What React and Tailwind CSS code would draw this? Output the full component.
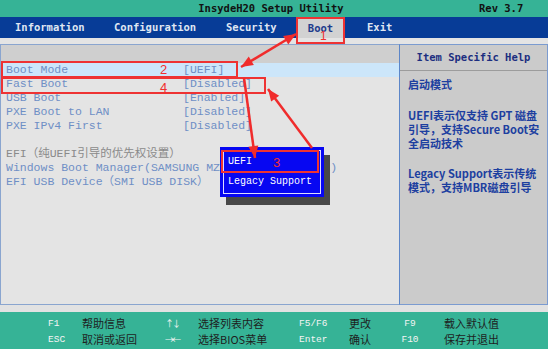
import React from 'react';

const bootRows = [
  { label: 'Boot Mode', value: '[UEFI]', active: true },
  { label: 'Fast Boot', value: '[Disabled]' },
  { label: 'USB Boot', value: '[Enabled]' },
  { label: 'PXE Boot to LAN', value: '[Disabled]' },
  { label: 'PXE IPv4 First', value: '[Disabled]' },
];

const footerRows = [
  ['F1', '帮助信息', '↑↓', '选择列表内容', 'F5/F6', '更改', 'F9', '载入默认值'],
  ['ESC', '取消或返回', '→←', '选择BIOS菜单', 'Enter', '确认', 'F10', '保存并退出'],
];

// red annotation arrow, optional head on either end
const Arrow = ({ x1, y1, x2, y2, startHead = false }) => {
  const head = (tx, ty, fx, fy) => {
    const dx = tx - fx;
    const dy = ty - fy;
    const len = Math.hypot(dx, dy);
    const ux = dx / len;
    const uy = dy / len;
    const bx = tx - ux * 12;
    const by = ty - uy * 12;
    return `${tx},${ty} ${bx - uy * 5},${by + ux * 5} ${bx + uy * 5},${by - ux * 5}`;
  };
  return (
    <g fill="#f02c2c" stroke="#f02c2c">
      <line x1={x1} y1={y1} x2={x2} y2={y2} strokeWidth="2.5" />
      <polygon points={head(x2, y2, x1, y1)} stroke="none" />
      {startHead && <polygon points={head(x1, y1, x2, y2)} stroke="none" />}
    </g>
  );
};

const App = () => {
  return (
    <div className="relative w-[548px] h-[349px] overflow-hidden flex flex-col bg-[#e4e4e4] font-['DejaVu_Sans_Mono',monospace]">
      {/* Title bar */}
      <div className="relative h-[17px] bg-[#36b396] text-[10.5px] font-bold text-[#111] leading-[17px]">
        <div className="text-center">
          <span className="ml-[-6px]">InsydeH20 Setup Utility</span>
        </div>
        <span className="absolute left-[479px] top-0">Rev 3.7</span>
      </div>

      {/* Menu bar */}
      <div className="h-[21px] bg-[#073c97] flex items-stretch pl-[15px] text-[10.5px] font-bold text-[#dfe6f2]">
        <span className="w-[99px] leading-[20px]">Information</span>
        <span className="w-[112px] leading-[20px]">Configuration</span>
        <span className="w-[72px] leading-[20px]">Security</span>
        <span className="w-[45px] mt-[2px] bg-[#d2d2d2] text-[#1e3c8c] text-center leading-[18px]">Boot</span>
        <span className="ml-[24px] leading-[20px]">Exit</span>
      </div>

      <div className="h-[6px] bg-[#e4e4e4]" />

      {/* Main area */}
      <div className="h-[261px] flex">
        <div className="w-[399px] border border-r-0 border-[#8aa5cf] bg-[#e4e4e4] flex flex-col font-['Liberation_Mono','Noto_Sans_CJK_SC',monospace] text-[11.5px] text-[#6f8fc6]">
          <div className="h-[18px] bg-[#cfcfcf]" />
          {bootRows.map((row) => (
            <div
              key={row.label}
              className={`h-[14px] leading-[14px] flex pl-[5px] ${row.active ? 'bg-[#cce6fa]' : ''}`}
            >
              <span className="w-[177px] whitespace-nowrap">{row.label}</span>
              <span className="whitespace-nowrap">{row.value}</span>
            </div>
          ))}
          <div className="h-[14px]" />
          <div className="h-[14px] leading-[14px] pl-[5px] whitespace-nowrap text-[#8a8a8a]">EFI（纯UEFI引导的优先权设置）</div>
          <div className="h-[14px] leading-[14px] pl-[5px] whitespace-nowrap">Windows Boot Manager(SAMSUNG MZVLB512HAJQ-000L2)</div>
          <div className="h-[14px] leading-[14px] pl-[5px] whitespace-nowrap">EFI USB Device（SMI USB DISK）</div>
        </div>

        <div className="flex-1 border border-l-[#5c86c8] border-[#7b9bd0] bg-[#cbcbcb] flex flex-col">
          <div className="h-[26px] border-b border-[#9c9c9c] flex items-center justify-center text-[10.5px] font-bold text-[#1c2e80]">
            Item Specific Help
          </div>
          <div className="pl-[8px] pt-[6px] font-['Noto_Sans_CJK_SC',sans-serif] text-[11px] font-bold leading-[14px] text-[#1d3fa0] whitespace-nowrap">
            <p>启动模式</p>
            <p className="mt-[17px]">
              UEFI表示仅支持 GPT 磁盘<br />引导，支持Secure Boot安<br />全启动技术
            </p>
            <p className="mt-[16px]">
              Legacy Support表示传统<br />模式，支持MBR磁盘引导
            </p>
          </div>
        </div>
      </div>

      <div className="h-[7px] bg-[#e2e2e2]" />

      {/* Footer */}
      <div className="flex-1 bg-[#36b396] pt-[4px] flex flex-col gap-[1px]">
        {footerRows.map((r) => (
          <div key={r[0]} className="h-[15px] leading-[15px] flex text-[11px] font-['Noto_Sans_CJK_SC',sans-serif] text-[#1e1e1e] whitespace-nowrap">
            <span className="w-[48px]" />
            <span className="w-[34px] font-['Liberation_Mono',monospace] text-[9.5px] text-[#f4f4f4]">{r[0]}</span>
            <span className="w-[83px]">{r[1]}</span>
            <span className="w-[33px] text-[9px] tracking-[-2px] text-[#f4f4f4]">{r[2]}</span>
            <span className="w-[101px]">{r[3]}</span>
            <span className="w-[50px] font-['Liberation_Mono',monospace] text-[9.5px] text-[#f4f4f4]">{r[4]}</span>
            <span className="w-[47px]">{r[5]}</span>
            <span className="w-[28px] text-center font-['Liberation_Mono',monospace] text-[9.5px] text-[#f4f4f4]">{r[6]}</span>
            <span className="w-[20px]" />
            <span>{r[7]}</span>
          </div>
        ))}
      </div>

      {/* Boot mode popup */}
      <div className="absolute left-[226px] top-[155px] w-[104px] h-[50px] bg-[#484848]" />
      <div className="absolute left-[220px] top-[147px] w-[104px] h-[50px] bg-[#0707f2]">
        <div className="absolute inset-[3px] border border-[#dcdcff] flex flex-col font-['Liberation_Mono',monospace] text-[10px] text-white pl-[4px]">
          <div className="h-[21px] flex items-center">UEFI</div>
          <div className="h-[19px] flex items-center whitespace-nowrap">Legacy Support</div>
        </div>
      </div>

      {/* Red annotations */}
      <div className="absolute inset-0 pointer-events-none">
        <svg width="548" height="349" className="absolute left-0 top-0">
          <g fill="none" stroke="#ee3333" strokeWidth="2">
            <rect x="297" y="18" width="47" height="25" />
            <rect x="2" y="62" width="235" height="15" />
            <rect x="2" y="78" width="263" height="15" />
            <rect x="222" y="151" width="96" height="21" />
          </g>
          <Arrow x1={296} y1={34} x2={241} y2={67} startHead />
          <Arrow x1={244} y1={78} x2={255} y2={158} />
          <Arrow x1={312} y1={148} x2={268} y2={89} />
        </svg>
        <span className="absolute left-[320px] top-[30px] text-[12px] leading-[12px] text-[#f03030] font-['Liberation_Sans',sans-serif]">1</span>
        <span className="absolute left-[160px] top-[63px] text-[13px] leading-[13px] text-[#f03030] font-['Liberation_Sans',sans-serif]">2</span>
        <span className="absolute left-[273px] top-[156px] text-[13px] leading-[13px] text-[#f03030] font-['Liberation_Sans',sans-serif]">3</span>
        <span className="absolute left-[160px] top-[81px] text-[13px] leading-[13px] text-[#f03030] font-['Liberation_Sans',sans-serif]">4</span>
      </div>
    </div>
  );
};

export default App;
